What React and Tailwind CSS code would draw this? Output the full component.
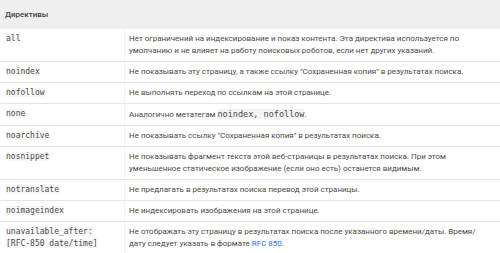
import React from "react";

const rows = [
  {
    code: "all",
    desc: "Нет ограничений на индексирование и показ контента. Эта директива используется по умолчанию и не влияет на работу поисковых роботов, если нет других указаний.",
  },
  {
    code: "noindex",
    desc: "Не показывать эту страницу, а также ссылку \"Сохраненная копия\" в результатах поиска.",
  },
  { code: "nofollow", desc: "Не выполнять переход по ссылкам на этой странице." },
  {
    code: "none",
    desc: (
      <>
        Аналогично метатегам <code className="font-['DejaVu_Sans_Mono',monospace] text-[8.5px] bg-[#f4f4f4] text-[#4a4a4a]">noindex, nofollow</code>.
      </>
    ),
  },
  {
    code: "noarchive",
    desc: "Не показывать ссылку \"Сохраненная копия\" в результатах поиска.",
  },
  {
    code: "nosnippet",
    desc: "Не показывать фрагмент текста этой веб-страницы в результатах поиска. При этом уменьшенное статическое изображение (если оно есть) останется видимым.",
  },
  { code: "notranslate", desc: "Не предлагать в результатах поиска перевод этой страницы." },
  { code: "noimageindex", desc: "Не индексировать изображения на этой странице." },
  {
    code: (
      <>
        unavailable_after:
        <br />
        [RFC-850 date/time]
      </>
    ),
    desc: (
      <>
        Не отображать эту страницу в результатах поиска после указанного времени/даты. Время/
        дату следует указать в формате <span className="text-[#1a73e8]">RFC 850</span>.
      </>
    ),
  },
];

export default function App() {
  return (
    <div className="w-[500px] h-[253px] overflow-hidden bg-white font-['Roboto',sans-serif] text-[8px] leading-[12px] text-[#4a4a4a]">
      <div className="h-[29px] bg-[#efefef] flex items-center px-[5px] font-medium text-[#444]">
        Директивы
      </div>
      {rows.map((r, i) => (
        <div key={i} className="flex border-b border-[#e4e4e4]">
          <div className="w-[124px] shrink-0 pl-[6px] py-[4px] font-['DejaVu_Sans_Mono',monospace] text-[8px] text-[#4a4a4a]">
            <span className="bg-[#f7f7f7]">{r.code}</span>
          </div>
          <div className="flex-1 pl-[4px] pr-[20px] py-[4px] border-l border-[#f3f3f3]">{r.desc}</div>
        </div>
      ))}
    </div>
  );
}
